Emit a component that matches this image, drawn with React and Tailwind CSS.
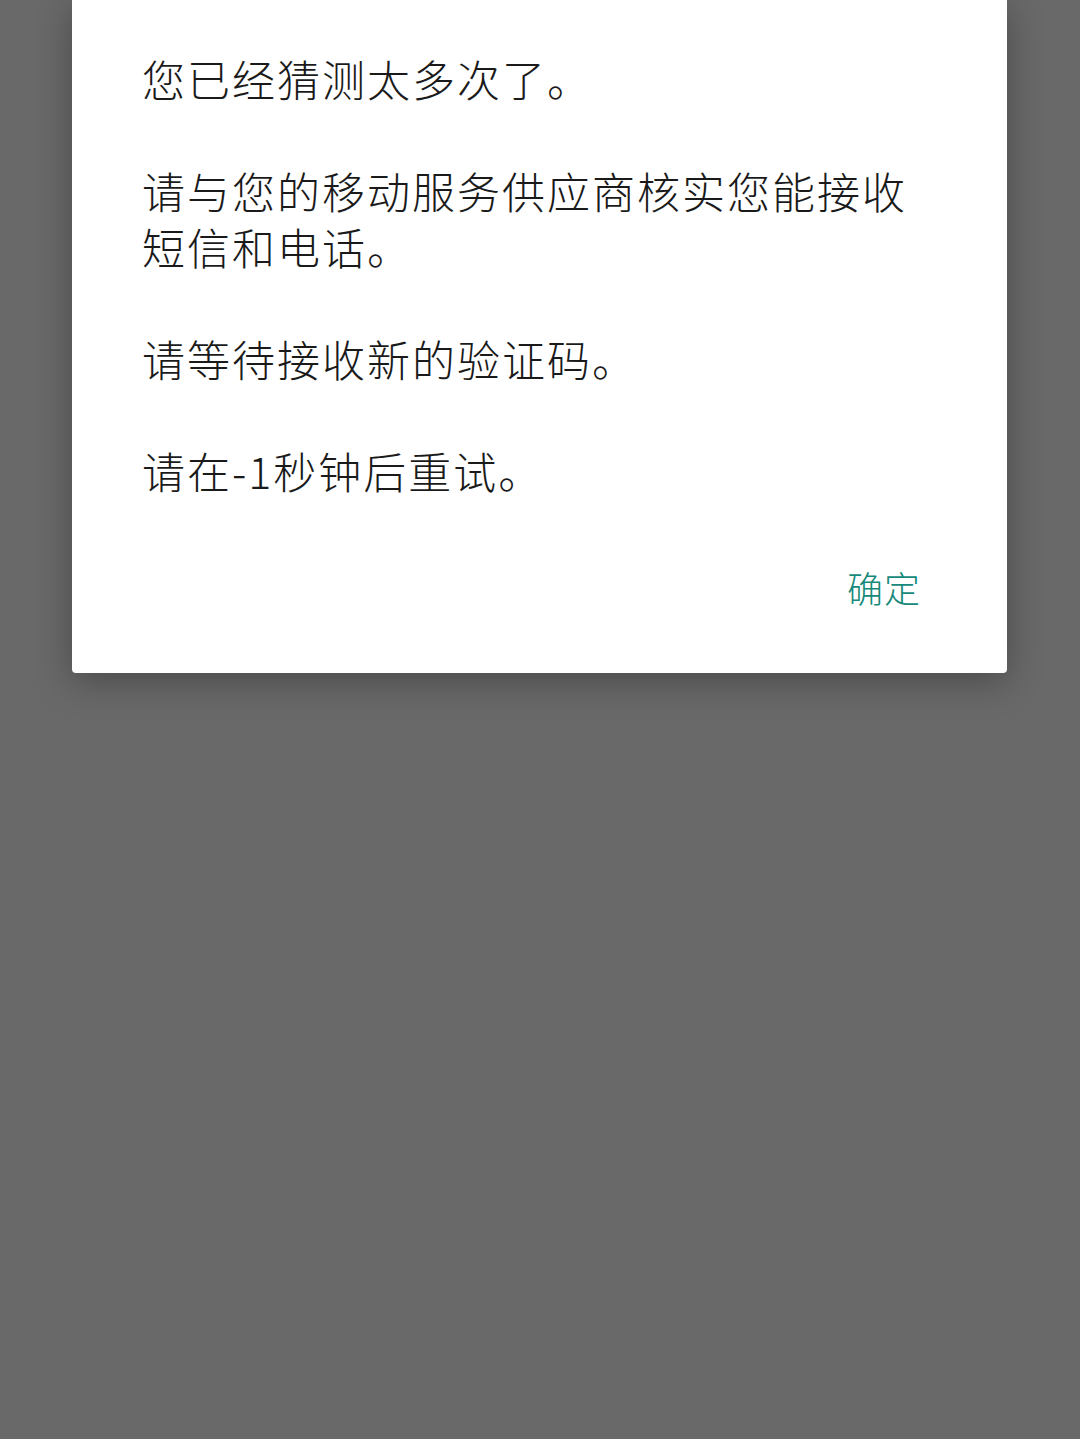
export default function App() {
  const paragraphs = [
    "您已经猜测太多次了。",
    "请与您的移动服务供应商核实您能接收短信和电话。",
    "请等待接收新的验证码。",
    "请在-1秒钟后重试。",
  ];

  return (
    <div
      className="min-h-[1439px] w-full bg-[#696969]"
      style={{ fontFamily: '"Noto Sans CJK SC", "Noto Sans", sans-serif' }}
    >
      <div className="ml-[72px] w-[935px] rounded-b-[4px] bg-white shadow-[0_8px_36px_rgba(0,0,0,0.3)]">
        <div className="flex w-[855px] flex-col gap-[56px] pl-[70px] pt-[50px] text-[43px] font-light leading-[56px] tracking-[2px] text-[#1a1a1a]">
          {paragraphs.map((p) => (
            <p key={p}>{p}</p>
          ))}
        </div>
        <div className="flex justify-end pr-[86px] pt-[65px] pb-[62px]">
          <button className="text-[36px] font-light leading-[48px] tracking-[1px] text-[#16897a]">确定</button>
        </div>
      </div>
    </div>
  );
}
